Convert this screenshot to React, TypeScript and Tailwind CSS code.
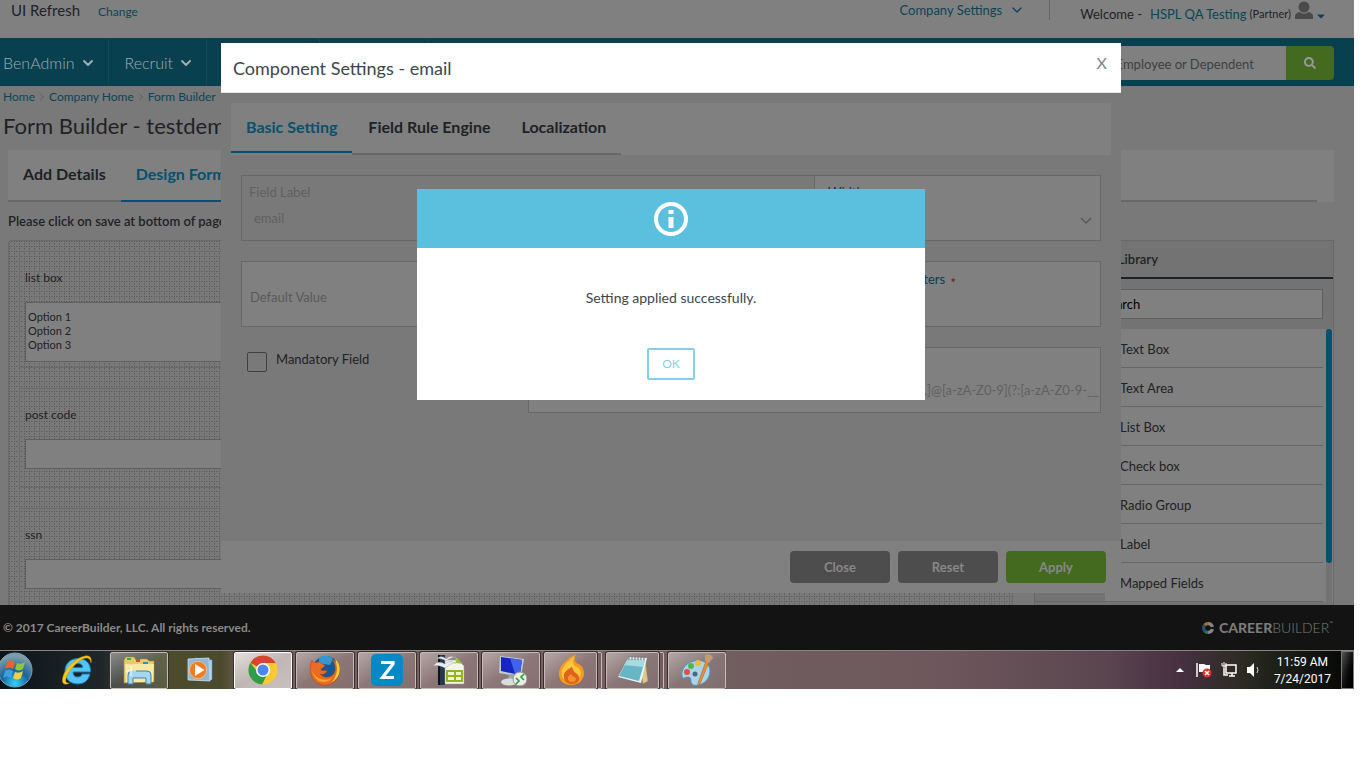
import type { ReactNode } from "react"
import { useId, useState } from "react"
import { ChevronDown, ChevronRight } from "lucide-react"
import { FaCaretDown, FaSearch } from "react-icons/fa"

const libraryItems = ["Text Box", "Text Area", "List Box", "Check box", "Radio Group", "Label", "Mapped Fields"]

const navItems = ["BenAdmin", "Recruit"]

const dots =
  "bg-[conic-gradient(at_1px_1px,transparent_270deg,#585858_0),conic-gradient(at_1px_1px,transparent_270deg,#5e5e5e_0),conic-gradient(at_1px_1px,transparent_270deg,#5e5e5e_0),conic-gradient(at_1px_1px,transparent_270deg,#6c6c6c_0),conic-gradient(at_1px_1px,transparent_270deg,#6c6c6c_0)] bg-[length:5px_5px] bg-[position:0_0,2px_0,0_2px,3px_0,0_3px]"

function TopBar() {
  return (
    <header className="flex h-[38px] items-start bg-[#808080] text-[#1e2226]">
      <div className="flex h-5 items-center gap-[18px] pl-[11px]">
        <span className="text-[15px]">UI Refresh</span>
        <a href="#change" className="pt-[3px] text-xs text-[#0a4557]">
          Change
        </a>
      </div>
      <div className="ml-auto flex h-5 items-center">
        <button type="button" className="flex items-center gap-[7px] text-[13px] text-[#0a4557]">
          Company Settings
          <ChevronDown className="h-4 w-4" />
        </button>
        <div className="ml-6 h-5 w-px bg-[#666]" />
      </div>
      <div className="flex h-7 items-center pr-[29px] pl-[30px] text-[13px]">
        <span>Welcome -</span>
        <a href="#profile" className="ml-2 text-[#0a4557]">
          HSPL QA Testing
        </a>
        <span className="ml-[3px] text-[11px]">(Partner)</span>
        <svg viewBox="0 0 18 18" className="mb-[9px] ml-1 h-[18px] w-[18px] fill-[#4a4a4a]" aria-hidden="true">
          <circle cx="9" cy="6" r="5.5" />
          <path d="M0 18v-3c0-2 2-3.500 4.500-4 2.500 2.300 6.500 2.300 9 0 2.500.5 4.500 2 4.500 4v3z" />
        </svg>
        <FaCaretDown className="mt-[3px] ml-1 h-3 w-2 text-[#0a4557]" />
      </div>
    </header>
  )
}

function NavBar() {
  return (
    <nav className="flex h-12 items-center bg-[#08404f] pr-5">
      {navItems.map((item) => (
        <button
          key={item}
          type="button"
          className="flex h-[46px] items-center gap-[5px] border-r border-[#164a58] pt-[2px] pr-3 pl-4 text-base font-light text-[#a0adb1] first:pl-[3px]"
        >
          {item}
          <ChevronDown className="h-4 w-4" strokeWidth={3} />
        </button>
      ))}
      <div className="h-[46px] w-[113px] border-r border-[#164a58]" />
      <div className="h-[46px] w-[109px] border-r border-[#164a58]" />
      <form className="mt-[2px] ml-auto flex h-[34px]" onSubmit={(e) => e.preventDefault()}>
        <input
          aria-label="Search Employee or Dependent"
          placeholder="Search Employee or Dependent"
          className="w-[226px] rounded-l bg-[#808080] pt-[2px] pl-[14px] text-[13px] placeholder:text-[#3c4043]"
        />
        <button type="submit" aria-label="Search" className="flex w-12 items-center justify-center rounded-r bg-[#446a20]">
          <FaSearch className="h-3 w-3 text-[#999]" />
        </button>
      </form>
    </nav>
  )
}

function FormPanel({ label, children }: { label: string; children: (id: string) => ReactNode }) {
  const id = useId()
  return (
    <div className="mb-5 border border-[#6a6a6a] pt-4 pr-[5px] pl-[5px]">
      <label htmlFor={id} className="mb-[14px] block text-xs leading-5 text-[#1e2226]">
        {label}
      </label>
      {children(id)}
    </div>
  )
}

function FormCanvas() {
  return (
    <div className={`flex-1 rounded-t border border-[#6a6a6a] pt-[10px] pr-5 pl-[10px] ${dots}`}>
      <FormPanel label="list box">
        {(id) => (
          <select
            id={id}
            multiple
            size={3}
            className="mb-[5px] block h-[60px] w-full overflow-hidden border border-[#5a6064] bg-[#808080] px-[2px] py-[7px] text-[11px] text-[#1e2226] [&_option]:h-[14px] [&_option]:min-h-0 [&_option]:p-0 [&_option]:leading-[14px]"
          >
            <option>Option 1</option>
            <option>Option 2</option>
            <option>Option 3</option>
          </select>
        )}
      </FormPanel>
      <FormPanel label="post code">
        {(id) => <input id={id} className="mb-[18px] block h-[30px] w-full border border-[#5a6064] bg-[#808080]" />}
      </FormPanel>
      <FormPanel label="ssn">
        {(id) => <input id={id} className="mb-[18px] block h-[30px] w-full border border-[#5a6064] bg-[#808080]" />}
      </FormPanel>
    </div>
  )
}

function Library() {
  return (
    <aside className="w-[300px] border border-[#686868] bg-[#737373] text-[#1e2226]">
      <h2 className="border-b-2 border-[#1e2226] py-2 pl-3 text-[13px] leading-5 font-semibold">Component Library</h2>
      <div className="p-[10px]">
        <input
          aria-label="Search components"
          defaultValue="Search"
          className="block h-[30px] w-full border border-[#5a6064] bg-[#808080] pl-14 text-[13px] text-black"
        />
      </div>
      <div className="flex bg-[#808080]">
        <div className="w-[70px] border-b border-[#666] bg-[#737373]" />
        <ul className="flex-1">
          {libraryItems.map((item) => (
            <li key={item} className="h-[39px] border-b border-[#666] pl-[15px] text-[13px] leading-10">
              {item}
            </li>
          ))}
        </ul>
        <div className="ml-[3px] w-[6px] bg-[#737373]">
          <div className="h-[234px] rounded-full bg-[#04516e]" />
        </div>
        <div className="w-px" />
      </div>
    </aside>
  )
}

function PageContent() {
  return (
    <main className="h-[519px] overflow-hidden bg-[#797979]">
      <div className="flex h-[22px] items-center gap-px pl-[3px] text-xs text-[#0a4557]">
        <a href="#home">Home</a>
        <ChevronRight className="h-3 w-3 text-[#5c5c5c]" />
        <a href="#company">Company Home</a>
        <ChevronRight className="h-3 w-3 text-[#5c5c5c]" />
        <a href="#builder">Form Builder</a>
      </div>
      <h1 className="pl-[3px] text-[22px] leading-9 text-[#1e2226]">Form Builder - testdemo</h1>
      <div className="mt-[6px] mr-5 ml-2 flex h-[52px] bg-[#808080] pr-[17px] text-base font-bold">
        <div className="flex flex-1 border-b-2 border-[#686868]">
          <button type="button" className="px-[15px] pb-[2px] text-[#1e2226]">
            Add Details
          </button>
          <button type="button" className="-mb-[2px] border-b-2 border-[#04516e] px-[15px] pb-[2px] text-[#045170]">
            Design Form
          </button>
        </div>
      </div>
      <p className="my-2 pl-2 text-[13px] leading-[22px] font-semibold text-[#1e2226]">
        Please click on save at bottom of page to save the form
      </p>
      <div className="mr-5 ml-2 flex gap-[21px]">
        <FormCanvas />
        <Library />
      </div>
    </main>
  )
}

function SettingsModal() {
  const box = "border border-[#686868]"
  return (
    <section role="dialog" aria-label="Component Settings" className="mt-[43px] w-[900px] bg-[#797979]">
      <div className="flex h-[50px] justify-between border-b border-[#e5e5e5] bg-white pr-[14px] pl-3">
        <h2 className="text-lg leading-[50px] text-[#3d464d]">Component Settings - email</h2>
        <button type="button" aria-label="Close settings" className="h-10 text-base text-[#7d868c]">
          X
        </button>
      </div>
      <div className="h-[448px] px-[10px] pt-[10px]">
        <div className="flex h-[52px] bg-[#808080] text-base font-bold text-[#1e2226]">
          <button type="button" className="mb-[2px] border-b-2 border-[#04516e] px-[15px] text-[#045170]">
            Basic Setting
          </button>
          <button type="button" className="border-b-2 border-[#686868] px-4 pb-[2px]">
            Field Rule Engine
          </button>
          <button type="button" className="border-b-2 border-[#686868] px-[15px] pb-[2px]">
            Localization
          </button>
        </div>
        <div className="px-[10px] pt-5">
          <div className={`flex h-[66px] ${box}`}>
            <div className="flex w-[572px] flex-col px-[7px] pt-[6px] text-[13px] text-[#606060]">
              <label htmlFor="field-label">Field Label</label>
              <input id="field-label" disabled defaultValue="email" className="mt-[6px] pl-[5px]" />
            </div>
            <div className="relative flex-1 border-l border-[#686868] bg-[#808080] pt-[6px] pl-[13px]">
              <label htmlFor="width" className="block text-[13px] text-[#0b3a52]">
                Width
              </label>
              <select id="width" className="block w-[260px] appearance-none text-[13px] text-[#808080]">
                <option></option>
              </select>
              <svg viewBox="0 0 12 8" className="absolute right-2 bottom-[15px] h-2 w-3 fill-none stroke-[#5a5a5a]" aria-hidden="true">
                <path d="M1 1l5 5 5-5" strokeWidth="1.500" />
              </svg>
            </div>
          </div>
          <div className={`mt-5 flex h-[66px] bg-[#808080] ${box}`}>
            <input
              aria-label="Default Value"
              placeholder="Default Value"
              className="w-[572px] pt-[6px] pl-2 text-[13px] placeholder:text-[#5a5a5a]"
            />
            <label className="w-[142px] pt-[7px] text-right text-[13px] whitespace-nowrap text-[#0b3a52]">
              Maximum Characters <span className="ml-[2px] align-sub text-[#7d1518]">*</span>
              <input className="block w-full" />
            </label>
          </div>
          <div className="mt-5 flex">
            <label className="flex w-[287px] items-start pt-[5px] pl-[6px] text-[13px] leading-[14px] text-[#1e2226]">
              <input
                type="checkbox"
                className="mr-[9px] h-5 w-5 appearance-none rounded-xs border border-[#404040] checked:bg-[#04516e]"
              />
              Mandatory Field
            </label>
            <div className={`h-[66px] flex-1 bg-[#808080] pt-8 ${box}`}>
              <input
                aria-label="Validation expression"
                defaultValue="^[a-zA-Z0-9._]+[a-zA-Z0-9_.]@[a-zA-Z0-9](?:[a-zA-Z0-9-__"
                className="block w-full pr-px text-right text-[13px] text-[#606060]"
              />
            </div>
          </div>
        </div>
      </div>
      <div className="flex h-[52px] items-center justify-end gap-2 bg-[#808080] pr-[15px] text-[13px] font-bold text-[#888]">
        <button type="button" className="h-8 w-[100px] rounded-sm bg-[#4d4d4d]">
          Close
        </button>
        <button type="button" className="h-8 w-[100px] rounded-sm bg-[#4d4d4d]">
          Reset
        </button>
        <button type="button" className="h-8 w-[100px] rounded-sm bg-[#446a20]">
          Apply
        </button>
      </div>
    </section>
  )
}

function SuccessAlert({ onClose }: { onClose: () => void }) {
  return (
    <section role="alertdialog" aria-label="Setting applied" className="absolute top-[189px] w-[508px] bg-white text-center">
      <div className="flex h-[59px] items-center justify-center bg-[#5bbfde]">
        <svg viewBox="0 0 36 36" className="h-9 w-9" aria-hidden="true">
          <circle cx="18" cy="18" r="15" fill="none" stroke="white" strokeWidth="4" />
          <path d="M15.500 9h5v4h-5zM15.500 16h5v11h-5z" fill="white" />
        </svg>
      </div>
      <p className="pt-10 text-sm text-[#3d464d]">Setting applied successfully.</p>
      <button
        type="button"
        onClick={onClose}
        className="mt-10 mb-5 h-8 w-12 rounded-xs border-2 border-[#84cfee] text-xs text-[#84cfee]"
      >
        OK
      </button>
    </section>
  )
}

function Footer() {
  return (
    <footer className="flex h-[45px] items-center justify-between bg-[#131313] pr-[21px] pl-[3px] text-[#8a8a8a]">
      <span className="text-xs font-bold">© 2017 CareerBuilder, LLC. All rights reserved.</span>
      <span className="flex items-center gap-[5px] text-sm text-[#7a7a7a]">
        <svg viewBox="0 0 12 12" className="h-3 w-3 fill-none" strokeWidth="3.200" aria-hidden="true">
          <path d="M2.600 3.200A4.400 4.400 0 0 1 6 1.600" stroke="#a7711a" />
          <path d="M2.600 3.200A4.400 4.400 0 0 0 3.200 9.400" stroke="#1c5577" />
          <path d="M3.200 9.400A4.400 4.400 0 0 0 6 10.400" stroke="#28745c" />
          <path d="M6 1.600A4.400 4.400 0 0 1 10.400 5M10.400 7A4.400 4.400 0 0 1 6 10.400" stroke="#858585" />
        </svg>
        <span className="flex">
          <span className="font-black">CAREER</span>
          <span className="font-light">BUILDER</span>
          <span className="text-[5px] leading-[10px]">™</span>
        </span>
      </span>
    </footer>
  )
}

const icons = {
  ie: (
    <>
      <path d="M29 20h-8c-.5 2-2 3-4.500 3-3 0-4.500-2-4.500-5h17.500C30 9.500 25 4.500 17 4.500 9 4.500 4 10 4 17c0 8 5 13 13 13 6 0 10.500-3.500 12-10zM12 13.500c.5-2.500 2-4 5-4s4.500 1.500 4.500 4z" fill="#53c4f3" stroke="#1b78b8" />
      <path d="M30 9C31 4 29 1 24 2 15 3.500 3 15 1.500 25c-.7 5 2 6.500 7 4-3 .5-4.500-1-3.500-4.500C7.500 16 18 5 25 4c3-.3 4.300 1.500 5 5z" fill="#f5c71f" stroke="#b98a10" strokeWidth=".5" />
    </>
  ),
  explorer: (
    <>
      <path d="M1 6l2-3h8l2 3h4V5h7l2 2h5v21l-30 1z" fill="#e9cc6a" stroke="#a88c3c" strokeWidth=".6" />
      <path d="M2 10h29l-1 18H3z" fill="#f8e9a5" />
      <path d="M4 4h4v2H4z" fill="#3cae3f" />
      <path d="M13 6h4v2h-4z" fill="#c9503b" />
      <path d="M20 8h5v2h-5z" fill="#2e8ed4" />
      <path d="M5 30v-9q0-4 4-4h15q4 0 4 4v9h-5v-6H10v6z" fill="#a4d6ed" stroke="#3e82b3" />
      <path d="M8 12v10M3 17h10" stroke="white" />
    </>
  ),
  wmp: (
    <>
      <path d="M10 4l17 2v19l-3 2V6z" fill="#8dbfdf" stroke="#427aa6" />
      <path d="M3 5l21-1 1 23-22-1z" fill="#90b9d5" stroke="#d8edf8" strokeWidth=".7" />
      <path d="M26 6v20" stroke="#d0e7f4" />
      <circle cx="13" cy="16" r="8.500" fill="#f07b20" stroke="#f7b67f" />
      <path d="M10 10l9.500 6-9.500 6z" fill="white" />
    </>
  ),
  chrome: (
    <>
      <circle cx="16" cy="16" r="14.500" fill="#fcc934" />
      <path d="M16 16L3.400 8.700A14.500 14.500 0 0 1 28.600 9H16z" fill="#d84335" />
      <path d="M3.400 8.700A14.500 14.500 0 0 0 15 30.500L21 19l-9 1z" fill="#2e9c4b" />
      <circle cx="16" cy="16" r="7" fill="white" />
      <circle cx="16" cy="16" r="5.500" fill="#4c87ef" />
    </>
  ),
  firefox: (
    <>
      <circle cx="17" cy="15" r="13" fill="#175896" />
      <path d="M10 4c4-3 11-3 14 1l-3 6-6-1-5 3z" fill="#3498cf" />
      <path d="M3 6c1 3 3 3 6 2 3 0 3 2 7 3-1 3-4 3-4 5 2 1 4 0 6 1-2 4-6 4-7 3 4 5 13 4 15-3 1-5-1-9-3-12 9 5 9 16 3 22-7 7-19 5-23-4C0 17 1 10 3 6z" fill="#ea6c20" stroke="#b33b18" strokeWidth=".5" />
      <path d="M26 5c8 7 5 19-3 23 6-7 6-15 3-23z" fill="#f8d12d" />
      <path d="M3 16c3 9 12 12 20 8-6 7-18 5-20-8z" fill="#f7a52c" />
    </>
  ),
  zimbra: (
    <>
      <rect width="32" height="32" rx="5" fill="#0588c6" />
      <path d="M10 8.500h12v1.500L11.500 23.500H23" fill="none" stroke="white" strokeWidth="3.200" />
    </>
  ),
  office: (
    <>
      <path d="M5 1h7v30H5z" fill="#25384d" />
      <path d="M5 1h2v30H5z" fill="#111" />
      <path d="M12 6h13l6 6v18H12z" fill="#f4f4ec" stroke="#999" strokeWidth=".5" />
      <path d="M22 2l8 8-7-1z" fill="#9cc13e" />
      <path d="M13 16h17v12H13z" fill="#94b51a" />
      <path d="M15 18h6v3h-6zm8 0h5v3h-5zm-8 5h6v3h-6zm8 0h5v3h-5z" fill="#eff5cf" />
      <path d="M0 12c5-6 9-3 12-2 4-4 8-2 11-1-6 0-8 4-11 5-4-2-7-3-12-2zM3 5c5-4 8-2 10 0 3-3 6-3 9-2-6 1-7 3-9 4-3-2-6-3-10-2z" fill="#e9eff0" stroke="#8d9aa0" strokeWidth=".4" />
    </>
  ),
  remote: (
    <>
      <path d="M5 2l24 3-3 18-22-4z" fill="#bfcdd3" />
      <path d="M6 3l21 3-2 15-19-4z" fill="#1824c4" />
      <path d="M15 4l12 2-2 15-5-1z" fill="#4362ea" />
      <path d="M14 20h7l2 6h-10z" fill="#a0aaae" />
      <ellipse cx="14" cy="28" rx="8" ry="3.500" fill="#d7dedf" />
      <circle cx="25" cy="25" r="7" fill="#e9ece7" stroke="#91988e" />
      <path d="M21 24l3 3-3 3M29 20l-3 3 3 3" fill="none" stroke="#2d9c37" strokeWidth="1.600" />
    </>
  ),
  flame: (
    <>
      <path d="M21 0c-5 3-17 9-17 20 0 7 5 11 12 11 8 0 13-5 13-12 0-6-4-9-8-10-2-3-2-6 0-9z" fill="#f79b20" />
      <path d="M20 2C15 6 5 12 7 22c2 7 11 9 16 4 5-6 3-12-3-14-3-3-2-7 0-10z" fill="#ffc53c" />
      <path d="M17 13c-4 2-9 5-8 10 0 5 4 7 8 7 5 0 8-3 7-7-1-4-6-4-7-10z" fill="#de641d" />
      <path d="M16 20c-3 2-4 4-2 7 2 2 7 1 7-2 0-2-4-2-5-5z" fill="#f4932b" />
    </>
  ),
  notepad: (
    <>
      <path d="M28 5l3 22-5 3-4-22z" fill="#dec88d" stroke="#9e8447" strokeWidth=".6" />
      <path d="M12 3l18 1-6 25L1 23z" fill="#e5f4f5" />
      <path d="M11 5l17 1-6 21L2 22z" fill="#67b6c5" />
      <path d="M11 5l17 1-2 7-19-2z" fill="#a8dbe0" />
      <path d="M12 2v4m3-4v4m3-4v4m3-4v4m3-4v4m3-4v4" stroke="#6b7377" />
    </>
  ),
  paint: (
    <>
      <path d="M13 7C4 9 0 16 1 22c1 4 3 1 6 1 5 0 1 6 5 8 7 2 17-4 17-14C29 9 22 5 13 7z" fill="#a9d4ea" stroke="#5790b9" />
      <circle cx="10" cy="12" r="3" fill="#57b24c" />
      <circle cx="17" cy="9" r="3" fill="#f0bb35" />
      <circle cx="6" cy="18" r="3" fill="#d95346" />
      <circle cx="14" cy="20" r="2.500" fill="#4b6880" />
      <path d="M28 8l-9 22q-3 2-2-1l8-22z" fill="#e98d35" stroke="#a75a1d" strokeWidth=".5" />
      <path d="M24 1c2-2 8 0 8 3l-4 5-4-2z" fill="#c49c6b" />
    </>
  ),
}

const taskbarApps: { name: string; icon: ReactNode; state: "pinned" | "open" | "active"; stacked?: boolean }[] = [
  { name: "Internet Explorer", icon: icons.ie, state: "pinned" },
  { name: "Windows Explorer", icon: icons.explorer, state: "open" },
  { name: "Media Player", icon: icons.wmp, state: "pinned" },
  { name: "Chrome", icon: icons.chrome, state: "active" },
  { name: "Firefox", icon: icons.firefox, state: "open" },
  { name: "Zimbra", icon: icons.zimbra, state: "open" },
  { name: "OpenOffice", icon: icons.office, state: "open" },
  { name: "Remote Desktop", icon: icons.remote, state: "open" },
  { name: "Burn", icon: icons.flame, state: "open", stacked: true },
  { name: "Notepad", icon: icons.notepad, state: "open", stacked: true },
  { name: "Paint", icon: icons.paint, state: "open" },
]

const appStates = {
  pinned: "border-transparent",
  open: "border-[#c4bab6] bg-linear-to-br from-white/45 via-white/15 to-white/10 shadow-[0_0_0_1px_#3a2e2e]",
  active: "border-white bg-linear-to-br from-white/80 via-white/55 to-white/60 shadow-[0_0_0_1px_#3a2e2e]",
}

function Taskbar() {
  return (
    <div className="flex h-[39px] items-center border-t border-[#8a8585] bg-black font-['Roboto',sans-serif] text-white">
      <div className="flex h-full items-center gap-1 bg-[linear-gradient(90deg,#0d1418,#20272a_100px,#4c4c2d_170px,#4b4a2d_222px,#765f5d_245px,#795f5f_560px,#715e60)]">
        <button type="button" aria-label="Start" className="h-full w-11">
          <svg viewBox="0 0 36 36" className="-ml-[3px] h-9 w-9">
            <defs>
              <radialGradient id="orb" cx=".5" cy=".9" r=".8">
                <stop offset="0" stopColor="#33d2fb" />
                <stop offset=".5" stopColor="#17649c" />
                <stop offset="1" stopColor="#7c9dab" />
              </radialGradient>
            </defs>
            <circle cx="18" cy="18" r="17" fill="url(#orb)" stroke="#7aa2b8" />
            <path d="M10 10q4-3 8 0l-2 7q-4-3-8 0z" fill="#e8642a" />
            <path d="M20 11q4 2 8-1l-2 7q-4 3-8 0z" fill="#8fc640" />
            <path d="M8 19q4-3 8 0l-2 7q-4-3-8 0z" fill="#3c9fe0" />
            <path d="M18 20q4 2 8-1l-2 7q-4 3-8 0z" fill="#f8cd3e" />
          </svg>
        </button>
        {taskbarApps.map((app) => (
          <div key={app.name} className="flex w-[58px] gap-px">
            <button
              type="button"
              aria-label={app.name}
              className={`flex h-[37px] flex-1 items-center justify-center rounded-xs border ${appStates[app.state]}`}
            >
              <svg viewBox="0 0 32 32" className="h-8 w-8" aria-hidden="true">
                {app.icon}
              </svg>
            </button>
            {app.stacked && <div className="w-1 rounded-r-xs border border-l-0 border-[#c4bab6]" />}
          </div>
        ))}
      </div>
      <div className="flex h-full flex-1 items-center justify-end bg-[linear-gradient(90deg,#715e60,#6d575c_35%,#5b4650_60%,#473142_72%,#2a2a20_83%,#161b14_90%,#050505)]">
        <svg viewBox="0 0 8 4" className="mr-3 h-1 w-2 fill-white" aria-hidden="true">
          <path d="M0 4l4-4 4 4z" />
        </svg>
        <svg viewBox="0 0 16 16" className="mr-[9px] h-4 w-4" aria-hidden="true">
          <path d="M1 1v14" stroke="white" strokeWidth="1.500" />
          <path d="M3 2h5l2 1h4v7H3z" fill="white" />
          <circle cx="11" cy="11" r="4.500" fill="#dc3029" />
          <path d="M9 9l4 4m0-4l-4 4" stroke="white" strokeWidth="1.500" />
        </svg>
        <svg viewBox="0 0 16 16" className="mr-[9px] h-4 w-4 fill-none stroke-white" aria-hidden="true">
          <path d="M5 3h10v8H5zM8 14h6M11 11v3M3 6v7h4" strokeWidth="1.500" />
          <path d="M1 1v3h4V1M3 0v6" />
        </svg>
        <svg viewBox="0 0 16 16" className="mr-3 h-4 w-4" aria-hidden="true">
          <path d="M1 5h3l4-4v14l-4-4H1z" fill="white" />
          <path d="M11 5q2 3 0 6" fill="none" stroke="#ccc" />
        </svg>
        <div className="mr-[10px] pt-px text-center text-xs leading-[17px]">
          <div>11:59 AM</div>
          <div>7/24/2017</div>
        </div>
        <div className="h-full w-[13px] border border-[#777] bg-linear-to-br from-[#555] via-[#111] to-black" />
      </div>
    </div>
  )
}

export default function App() {
  const [alertOpen, setAlertOpen] = useState(true)

  return (
    <div className="overflow-hidden bg-white pr-3 font-['Lato',sans-serif] leading-5">
      <div className="relative overflow-hidden">
        <TopBar />
        <NavBar />
        <PageContent />
        <div className="absolute inset-0 right-3 flex items-start justify-center">
          <SettingsModal />
          {alertOpen && <SuccessAlert onClose={() => setAlertOpen(false)} />}
        </div>
      </div>
      <Footer />
      <Taskbar />
    </div>
  )
}
